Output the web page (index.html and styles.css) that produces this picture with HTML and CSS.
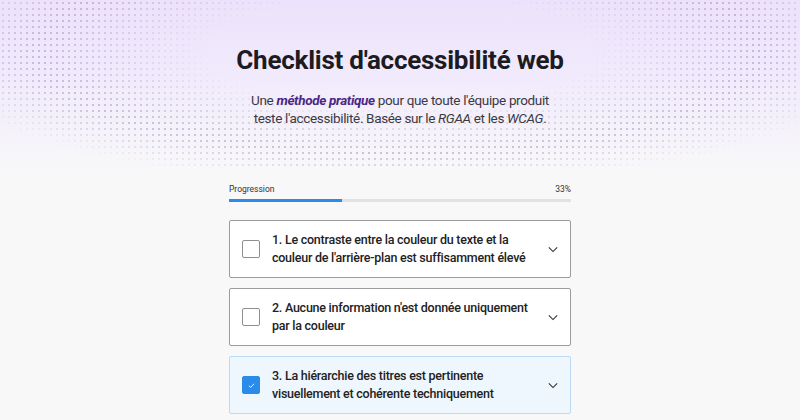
FILE: index.html
```html
<!DOCTYPE html>
<html lang="fr">
<head>
<meta charset="utf-8">
<title>Checklist d'accessibilité web</title>
<link rel="stylesheet" href="styles.css">
</head>
<body>
<header class="hero">
  <div class="dots"></div>
  <h1 class="title">Checklist d'accessibilité web</h1>
  <p class="lead">Une <strong><em>méthode pratique</em></strong> pour que toute l'équipe produit<br>teste l'accessibilité. Basée sur le <em>RGAA</em> et les <em>WCAG</em>.</p>
</header>
<main class="content">
  <div class="progress">
    <div class="progress-head"><span>Progression</span><span>33%</span></div>
    <div class="track"><div class="fill" style="width:33%"></div></div>
  </div>
  <ul class="list">
    <li class="item">
      <span class="box"></span>
      <span class="label">1. Le contraste entre la couleur du texte et la couleur de l'arrière-plan est suffisamment élevé</span>
      <svg class="chev" viewBox="0 0 12 8" width="10" height="7"><path d="M1 1.5l5 5 5-5" fill="none" stroke="#333" stroke-width="1.3"/></svg>
    </li>
    <li class="item">
      <span class="box"></span>
      <span class="label">2. Aucune information n'est donnée uniquement par la couleur</span>
      <svg class="chev" viewBox="0 0 12 8" width="10" height="7"><path d="M1 1.5l5 5 5-5" fill="none" stroke="#333" stroke-width="1.3"/></svg>
    </li>
    <li class="item done">
      <span class="box"><svg viewBox="0 0 12 12" width="9" height="9"><path d="M2.5 6.3l2.3 2.2 4.7-4.8" fill="none" stroke="#fff" stroke-width="1.2"/></svg></span>
      <span class="label">3. La hiérarchie des titres est pertinente visuellement et cohérente techniquement</span>
      <svg class="chev" viewBox="0 0 12 8" width="10" height="7"><path d="M1 1.5l5 5 5-5" fill="none" stroke="#333" stroke-width="1.3"/></svg>
    </li>
  </ul>
</main>
</body>
</html>
```
FILE: styles.css
```css
* { box-sizing: border-box; }
html, body { margin: 0; padding: 0; }
body {
  background: #f8f8f9;
  font-family: Roboto, "Liberation Sans", sans-serif;
  color: #222;
}
.hero {
  position: relative;
  height: 170px;
  padding-top: 42px;
  text-align: center;
  background: linear-gradient(180deg, #ece2fb 0%, #f1eafc 45%, #f8f8f9 100%);
  overflow: hidden;
}
.dots {
  position: absolute;
  inset: 0;
  background-image: radial-gradient(circle, rgba(120, 100, 160, 0.35) 0.8px, transparent 1.1px);
  background-size: 6px 6px;
  -webkit-mask-image: radial-gradient(ellipse 60% 80% at 50% 30%, transparent 40%, #000 75%, transparent 100%);
  mask-image: radial-gradient(ellipse 60% 80% at 50% 30%, transparent 40%, #000 75%, transparent 100%);
}
.title {
  position: relative;
  margin: 0;
  font-size: 26px;
  line-height: 36px;
  font-weight: 700;
  letter-spacing: -0.25px;
  color: #1d1b22;
}
.lead {
  position: relative;
  margin: 13px 0 0;
  font-size: 13.5px;
  line-height: 18px;
  letter-spacing: -0.35px;
  color: #3c3944;
}
.lead strong { color: #4b2784; font-weight: 700; }
.content {
  width: 342px;
  margin: 0 auto;
  padding-top: 13px;
}
.progress-head {
  display: flex;
  justify-content: space-between;
  font-size: 8.5px;
  line-height: 12px;
  color: #333;
}
.track {
  margin-top: 4px;
  height: 3px;
  background: #e2e2e6;
}
.fill { height: 100%; background: #2b8be8; }
.list {
  list-style: none;
  margin: 18px 0 0;
  padding: 0;
  display: flex;
  flex-direction: column;
  gap: 10px;
}
.item {
  display: flex;
  align-items: center;
  height: 58px;
  padding: 0 12px 0 12px;
  background: #fff;
  border: 1px solid #9c9c9f;
  border-radius: 2px;
}
.item.done { background: #eef6fe; border-color: #bcd9f5; }
.box {
  flex: none;
  width: 18px;
  height: 18px;
  border: 1px solid #8e8e92;
  border-radius: 2px;
  background: #fff;
  display: flex;
  align-items: center;
  justify-content: center;
}
.done .box { background: #2b8be8; border-color: #2b8be8; }
.label {
  flex: 1;
  margin: 0 14px 0 12px;
  font-size: 12.5px;
  line-height: 18px;
  font-weight: 500;
  letter-spacing: -0.25px;
  color: #222;
}
.chev { flex: none; }
```
